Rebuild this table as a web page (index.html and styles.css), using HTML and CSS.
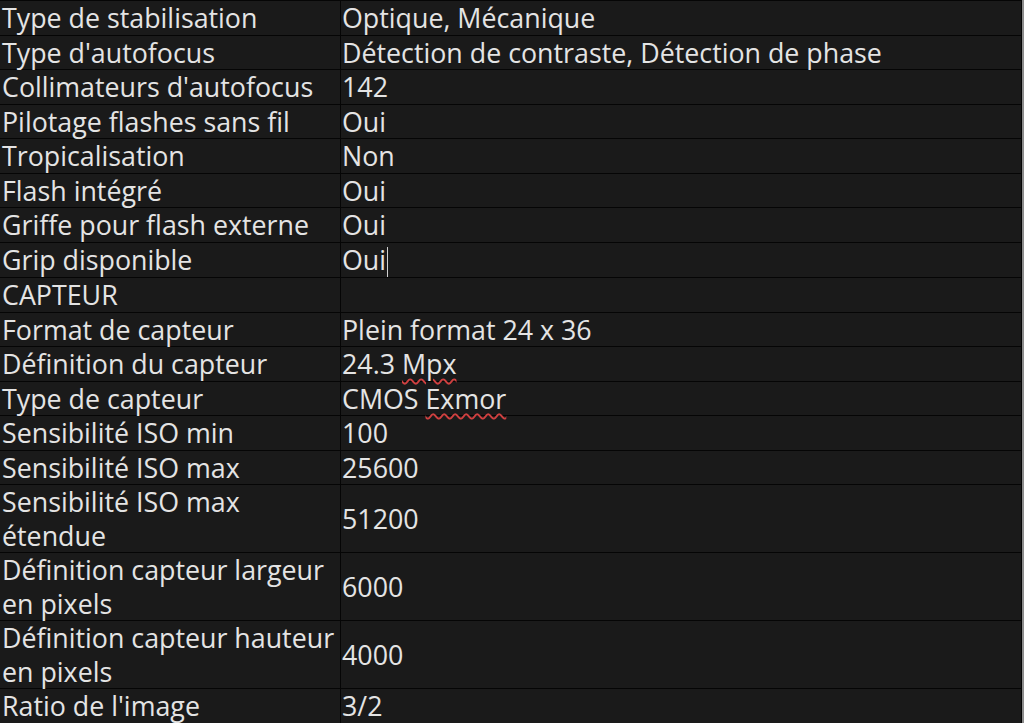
FILE: index.html
```html
<!DOCTYPE html>
<html lang="fr">
<head>
<meta charset="utf-8">
<title>Caractéristiques</title>
<link rel="stylesheet" href="styles.css">
</head>
<body>
<table class="specs">
  <tbody>
    <tr><td class="k">Type de stabilisation</td><td class="v">Optique, Mécanique</td></tr>
    <tr><td class="k">Type d'autofocus</td><td class="v">Détection de contraste, Détection de phase</td></tr>
    <tr><td class="k">Collimateurs d'autofocus</td><td class="v">142</td></tr>
    <tr><td class="k">Pilotage flashes sans fil</td><td class="v">Oui</td></tr>
    <tr><td class="k">Tropicalisation</td><td class="v">Non</td></tr>
    <tr><td class="k">Flash intégré</td><td class="v">Oui</td></tr>
    <tr><td class="k">Griffe pour flash externe</td><td class="v">Oui</td></tr>
    <tr><td class="k">Grip disponible</td><td class="v">Oui<span class="caret"></span></td></tr>
    <tr><td class="k">CAPTEUR</td><td class="v"></td></tr>
    <tr><td class="k">Format de capteur</td><td class="v">Plein format 24 x 36</td></tr>
    <tr><td class="k">Définition du capteur</td><td class="v">24.3 <span class="spell">Mpx</span></td></tr>
    <tr><td class="k">Type de capteur</td><td class="v">CMOS <span class="spell">Exmor</span></td></tr>
    <tr><td class="k">Sensibilité ISO min</td><td class="v">100</td></tr>
    <tr><td class="k">Sensibilité ISO max</td><td class="v">25600</td></tr>
    <tr class="tall"><td class="k">Sensibilité ISO max<br>étendue</td><td class="v">51200</td></tr>
    <tr class="tall"><td class="k">Définition capteur largeur<br>en pixels</td><td class="v">6000</td></tr>
    <tr class="tall"><td class="k">Définition capteur hauteur<br>en pixels</td><td class="v">4000</td></tr>
    <tr><td class="k">Ratio de l'image</td><td class="v">3/2</td></tr>
  </tbody>
</table>
</body>
</html>
```

FILE: styles.css
```css
html, body {
  margin: 0;
  padding: 0;
}
body {
  background: #8c8c8c;
  width: 1024px;
  height: 723px;
  overflow: hidden;
}
.specs {
  border-collapse: collapse;
  width: 1022px;
  background: #1a1a1a;
  color: #e4e4e4;
  font-family: "Open Sans", "Noto Sans", sans-serif;
  font-size: 26.8px;
  line-height: 33.5px;
  border-top: 1px solid #000;
}
.specs td {
  border: 1px solid #050505;
  padding: 0 0 0 2px;
  vertical-align: middle;
  white-space: nowrap;
}
.specs td.k {
  width: 338px;
}
.specs td.v {
  padding-left: 1px;
}
.specs td:first-child {
  border-left: none;
}
.spell {
  text-decoration: underline wavy #d04040;
  text-decoration-thickness: 1.5px;
  text-underline-offset: 4px;
}
.caret {
  display: inline-block;
  width: 0;
  height: 30px;
  border-left: 1px solid #cfcfcf;
  vertical-align: middle;
  margin-left: 1px;
}
```
